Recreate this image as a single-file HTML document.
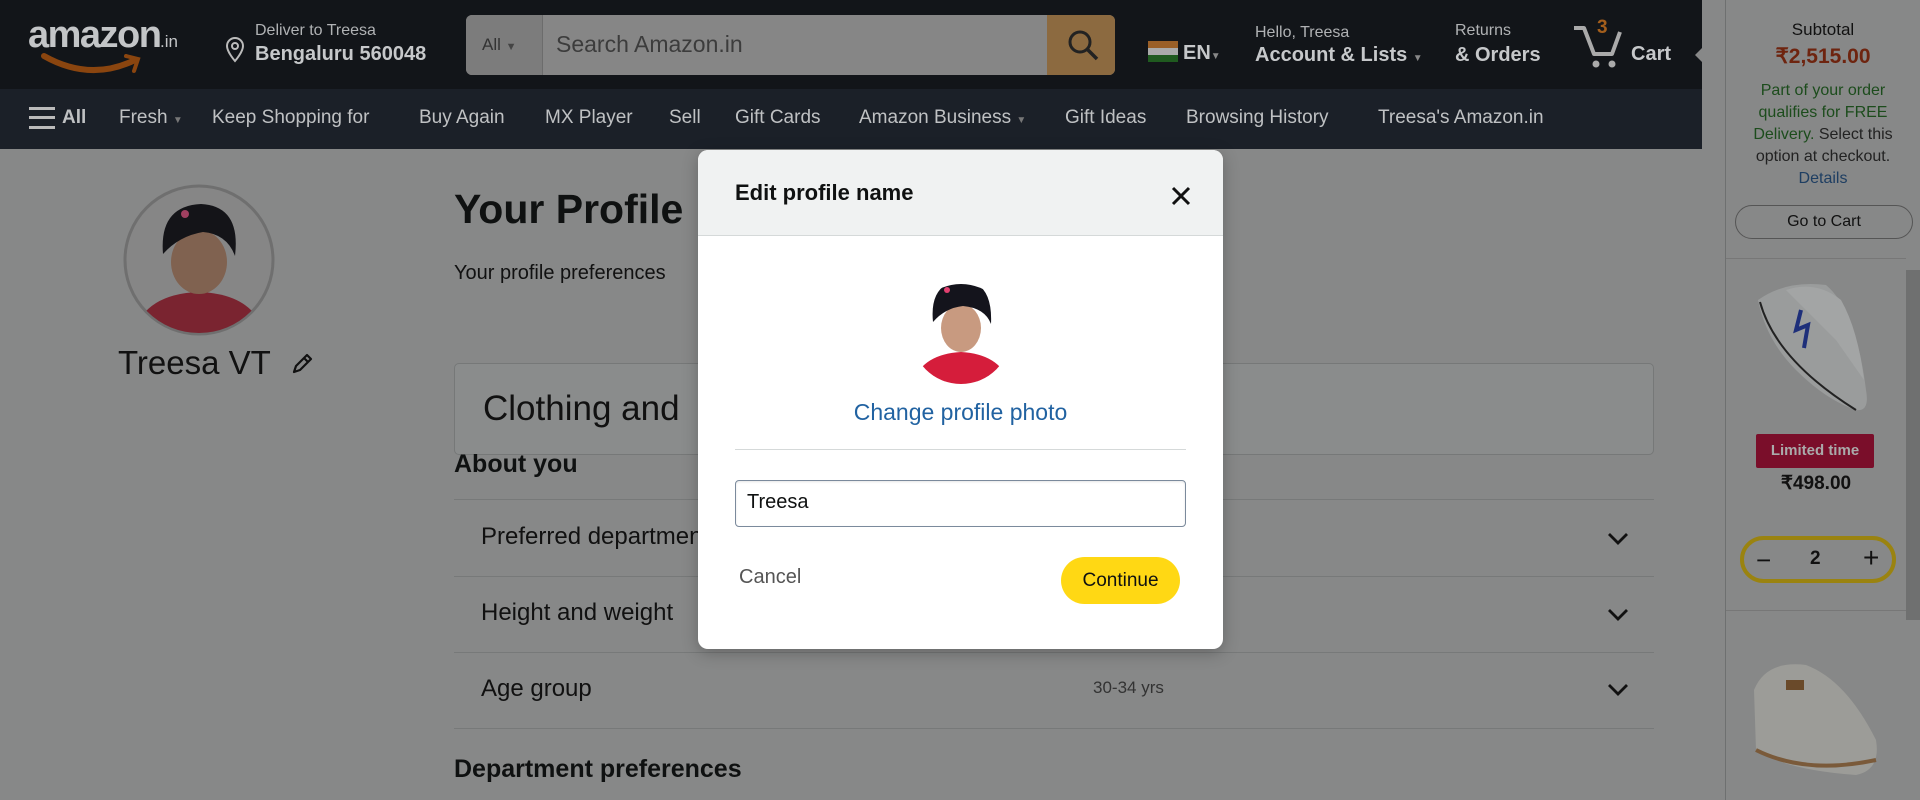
<!DOCTYPE html>
<html><head><meta charset="utf-8"><style>
*{margin:0;padding:0;box-sizing:border-box}
body{width:1920px;height:800px;overflow:hidden;background:#878888;font-family:"Liberation Sans",sans-serif;position:relative;color:#0f1111}
.a{position:absolute;white-space:nowrap}
#top{position:absolute;left:0;top:0;width:1702px;height:89px;background:#121519}
#sub{position:absolute;left:0;top:89px;width:1702px;height:60px;background:#1b2028}
.sn{position:absolute;top:107px;font-size:19px;color:#bfc1c3}
.hl{color:#b0b2b4;font-size:16px}
.hb{color:#c6c8ca;font-size:20px;font-weight:bold}
#side{position:absolute;left:1725px;top:0;width:195px;height:800px;border-left:1px solid #6e7070;background:#878888}
.row{position:absolute;left:454px;width:1200px;border-top:1px solid #777979}
.chev{position:absolute;left:1606px}
#modal{position:absolute;left:698px;top:150px;width:525px;height:499px;background:#fff;border-radius:10px;overflow:hidden;box-shadow:0 4px 16px rgba(0,0,0,.25)}
</style></head><body>
<div id="top"></div><div id="sub"></div>
<div class="a" style="left:28px;top:14px;font-size:38px;font-weight:bold;color:#c3c5c7;letter-spacing:-1.5px">amazon</div>
<div class="a" style="left:160px;top:32px;font-size:17px;color:#c3c5c7">.in</div>
<svg class="a" style="left:40px;top:52px" width="110" height="26"><path d="M4 4 Q50 30 95 8" stroke="#8a450f" stroke-width="6" fill="none" stroke-linecap="round"/><path d="M86 4 L98 7 L94 19" stroke="#8a450f" stroke-width="4" fill="none" stroke-linecap="round"/></svg>
<svg class="a" style="left:225px;top:36px" width="20" height="28"><path d="M10 2a8 8 0 0 1 8 8c0 6-8 15-8 15S2 16 2 10a8 8 0 0 1 8-8z" stroke="#bbb" stroke-width="2" fill="none"/><circle cx="10" cy="10" r="3" stroke="#bbb" stroke-width="2" fill="none"/></svg>
<div class="a hl" style="left:255px;top:22px">Deliver to Treesa</div>
<div class="a hb" style="left:255px;top:43px">Bengaluru 560048</div>
<div class="a" style="left:466px;top:15px;width:649px;height:60px;background:#868686;border-radius:6px;overflow:hidden">
<div style="position:absolute;left:0;top:0;width:77px;height:60px;background:#7c7c7c;border-right:1px solid #6c6c6c"></div>
<div class="a" style="left:16px;top:20px;font-size:17px;color:#333">All <span style="font-size:11px;color:#444">▼</span></div>
<div class="a" style="left:90px;top:16px;font-size:23px;color:#3c3c3c">Search Amazon.in</div>
<div style="position:absolute;right:0;top:0;width:68px;height:60px;background:#8c6a40"></div>
<svg class="a" style="left:600px;top:13px" width="36" height="36"><circle cx="14" cy="14" r="10" stroke="#222" stroke-width="3" fill="none"/><path d="M21 21 L31 31" stroke="#222" stroke-width="3.5"/></svg>
</div>
<div class="a" style="left:1148px;top:41px;width:30px;height:21px"><div style="height:7px;background:#9a5f27"></div><div style="height:7px;background:#aaa"></div><div style="height:7px;background:#1f5a1f"></div></div>
<div class="a hb" style="left:1183px;top:42px">EN<span style="font-size:10px;color:#888">▼</span></div>
<div class="a hl" style="left:1255px;top:24px">Hello, Treesa</div>
<div class="a hb" style="left:1255px;top:44px">Account &amp; Lists <span style="font-size:10px;color:#888">▼</span></div>
<div class="a hl" style="left:1455px;top:22px">Returns</div>
<div class="a hb" style="left:1455px;top:44px">&amp; Orders</div>
<svg class="a" style="left:1572px;top:24px" width="60" height="44"><path d="M2 4 L12 4 L22 30 L40 30 L48 8" stroke="#aaa" stroke-width="4" fill="none" stroke-linejoin="round"/><circle cx="24" cy="40" r="3.5" fill="#aaa"/><circle cx="40" cy="40" r="3.5" fill="#aaa"/></svg>
<div class="a" style="left:1597px;top:17px;font-size:19px;font-weight:bold;color:#a35e1c">3</div>
<div class="a hb" style="left:1631px;top:43px">Cart</div>
<div class="a" style="left:1695px;top:47px;width:0;height:0;border-top:8px solid transparent;border-bottom:8px solid transparent;border-right:8px solid #878888"></div>
<div class="a" style="left:29px;top:107px;width:26px;height:22px;border-top:3px solid #bbb;border-bottom:3px solid #bbb"><div style="margin-top:6px;border-top:3px solid #bbb"></div></div>
<div class="sn" style="left:62px;font-weight:bold">All</div>
<div class="sn" style="left:119px">Fresh <span style="font-size:10px;color:#777">▼</span></div>
<div class="sn" style="left:212px">Keep Shopping for</div>
<div class="sn" style="left:419px">Buy Again</div>
<div class="sn" style="left:545px">MX Player</div>
<div class="sn" style="left:669px">Sell</div>
<div class="sn" style="left:735px">Gift Cards</div>
<div class="sn" style="left:859px">Amazon Business <span style="font-size:10px;color:#777">▼</span></div>
<div class="sn" style="left:1065px">Gift Ideas</div>
<div class="sn" style="left:1186px">Browsing History</div>
<div class="sn" style="left:1378px">Treesa's Amazon.in</div>
<svg class="a" style="left:123px;top:184px" width="152" height="152" viewBox="0 0 152 152"><defs><clipPath id="c1"><circle cx="76" cy="76" r="73"/></clipPath></defs><circle cx="76" cy="76" r="74" fill="#868686" stroke="#6f6f6f" stroke-width="3"/><g clip-path="url(#c1)"><path d="M10 152 Q20 110 76 108 Q132 110 142 152Z" fill="#7a2430"/><ellipse cx="76" cy="78" rx="28" ry="32" fill="#806250"/><path d="M40 70 Q36 22 78 20 Q118 22 112 72 Q104 50 80 48 Q56 52 40 70Z" fill="#141418"/><circle cx="62" cy="30" r="4" fill="#a04060"/></g></svg>
<div class="a" style="left:118px;top:344px;font-size:33px;color:#111">Treesa VT</div>
<svg class="a" style="left:290px;top:352px" width="24" height="24"><path d="M4 20 L6 14 L17 3 L21 7 L10 18 Z M14 6 L18 10" stroke="#111" stroke-width="2.2" fill="none" stroke-linejoin="round"/></svg>
<div class="a" style="left:454px;top:186px;font-size:41px;font-weight:bold;color:#0f1111">Your Profile</div>
<div class="a" style="left:454px;top:262px;font-size:20px;color:#111">Your profile preferences</div>
<div class="a" style="left:454px;top:363px;width:1200px;height:92px;background:#8a8c8c;border:1px solid #767878;border-radius:5px"></div>
<div class="a" style="left:483px;line-height:92px;top:363px;font-size:35px;color:#111">Clothing and</div>
<div class="a" style="left:454px;top:450px;font-size:24px;font-weight:bold;line-height:28px;top:449px;padding-top:0"></div>
<div class="a" style="left:454px;top:449px;font-size:24px;font-weight:bold;margin-top:0;transform:translateY(0)"></div>
<div class="a" style="left:454px;top:450px;font-size:25px;font-weight:bold;line-height:26px;top:451px">About you</div>
<div class="row" style="top:499px"></div><div class="row" style="top:576px"></div><div class="row" style="top:652px"></div><div class="row" style="top:728px"></div>
<div class="a" style="left:481px;top:523px;font-size:24px;color:#111">Preferred departments</div>
<div class="a" style="left:481px;top:599px;font-size:24px;color:#111">Height and weight</div>
<div class="a" style="left:481px;top:675px;font-size:24px;color:#111">Age group</div>
<div class="a" style="left:1093px;top:678px;font-size:17px;color:#333">30-34 yrs</div>
<svg class="chev" style="top:530px" width="24" height="18"><path d="M3 4 L12 13 L21 4" stroke="#111" stroke-width="2.8" fill="none"/></svg>
<svg class="chev" style="top:606px" width="24" height="18"><path d="M3 4 L12 13 L21 4" stroke="#111" stroke-width="2.8" fill="none"/></svg>
<svg class="chev" style="top:681px" width="24" height="18"><path d="M3 4 L12 13 L21 4" stroke="#111" stroke-width="2.8" fill="none"/></svg>
<div class="a" style="left:454px;top:755px;font-size:25px;font-weight:bold">Department preferences</div>
<div id="side">
<div class="a" style="left:0;width:194px;text-align:center;top:20px;font-size:17px;color:#111">Subtotal</div>
<div class="a" style="left:0;width:194px;text-align:center;top:44px;font-size:21px;font-weight:bold;color:#6e240f">₹2,515.00</div>
<div class="a" style="left:17px;width:160px;text-align:center;top:80px;font-size:16px;line-height:22px;color:#1c4c1c;white-space:normal">Part of your order qualifies for FREE Delivery. <span style="color:#222">Select this option at checkout.</span><br><span style="color:#1e3e62">Details</span></div>
<div class="a" style="left:9px;top:205px;width:178px;height:34px;border:1px solid #555;border-radius:17px;text-align:center;line-height:32px;font-size:16px;color:#111">Go to Cart</div>
<div class="a" style="left:0;top:258px;width:180px;border-top:1px solid #777"></div>
<div class="a" style="left:180px;top:270px;width:15px;height:350px;background:#6f7070"></div>
<svg class="a" style="left:20px;top:270px" width="140" height="150"><path d="M12 30 Q40 10 80 15 Q110 40 120 120 Q124 142 110 140 Q80 130 50 100 Q20 70 12 30Z" fill="#9a9c9c"/><path d="M40 20 Q70 10 95 30 Q112 60 118 110 L90 70Z" fill="#a3a5a5"/><path d="M14 32 Q30 90 110 140" stroke="#222" stroke-width="2" fill="none"/><path d="M55 40 L50 60 L62 55 L58 78" stroke="#1e2f7a" stroke-width="4" fill="none"/></svg>
<div class="a" style="left:30px;top:434px;width:118px;height:34px;background:#7a0e2a;border-radius:2px;color:#aaa;font-weight:bold;font-size:15px;text-align:center;line-height:34px">Limited time</div>
<div class="a" style="left:0;width:180px;text-align:center;top:472px;font-size:19px;font-weight:bold;color:#111">₹498.00</div>
<div class="a" style="left:14px;top:536px;width:156px;height:47px;border:4px solid #9a8310;border-radius:24px"></div>
<div class="a" style="left:30px;top:545px;font-size:26px;color:#111">−</div>
<div class="a" style="left:84px;top:548px;font-size:19px;font-weight:bold;color:#111">2</div>
<div class="a" style="left:137px;top:542px;font-size:28px;color:#111">+</div>
<div class="a" style="left:0;top:610px;width:180px;border-top:1px solid #777"></div>
<svg class="a" style="left:20px;top:640px" width="140" height="140"><path d="M8 50 Q20 20 60 25 Q100 40 130 100 Q135 130 110 135 Q40 130 10 110Z" fill="#9c9c98"/><path d="M10 110 Q60 135 130 120" stroke="#7a5a3a" stroke-width="4" fill="none"/><rect x="40" y="40" width="18" height="10" fill="#6a4a2a"/></svg>
</div>
<div id="modal">
<div style="height:86px;background:#f0f2f2;border-bottom:1px solid #d5d9d9"></div>
<div class="a" style="left:37px;top:30px;font-size:22px;font-weight:bold;color:#0f1111">Edit profile name</div>
<svg class="a" style="left:472px;top:35px" width="22" height="22"><path d="M3 3 L19 19 M19 3 L3 19" stroke="#111" stroke-width="3"/></svg>
<svg class="a" style="left:213px;top:126px" width="100" height="110" viewBox="0 0 100 110"><defs><clipPath id="c2"><circle cx="50" cy="58" r="50"/></clipPath></defs><g clip-path="url(#c2)"><rect width="100" height="110" fill="#fff"/><path d="M0 110 Q10 78 50 76 Q90 78 100 110Z" fill="#d51d3b"/><ellipse cx="50" cy="52" rx="20" ry="24" fill="#c89a80"/><path d="M22 46 Q18 6 52 4 Q82 6 80 48 Q74 32 52 30 Q34 32 22 46Z" fill="#14141c"/><circle cx="36" cy="14" r="3" fill="#e34070"/></g></svg>
<div class="a" style="left:0;width:525px;text-align:center;top:249px;font-size:23px;color:#2162a1">Change profile photo</div>
<div class="a" style="left:37px;top:299px;width:451px;border-top:1px solid #d5d9d9"></div>
<div class="a" style="left:37px;top:330px;width:451px;height:47px;border:1px solid #7b8a9c;border-radius:4px;box-shadow:inset 0 1px 2px rgba(0,0,0,.1)"></div>
<div class="a" style="left:49px;top:341px;font-size:20px;color:#0f1111">Treesa</div>
<div class="a" style="left:41px;top:416px;font-size:20px;color:#555">Cancel</div>
<div class="a" style="left:363px;top:407px;width:119px;height:47px;background:#ffd814;border-radius:24px;text-align:center;line-height:47px;font-size:19px;color:#0f1111">Continue</div>
</div>
</body></html>
